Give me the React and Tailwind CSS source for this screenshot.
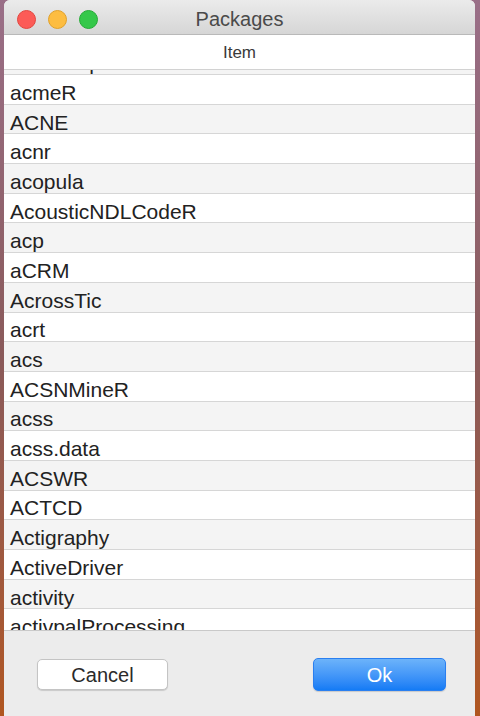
import React from "react";

const packages = [
  "acmeR",
  "ACNE",
  "acnr",
  "acopula",
  "AcousticNDLCodeR",
  "acp",
  "aCRM",
  "AcrossTic",
  "acrt",
  "acs",
  "ACSNMineR",
  "acss",
  "acss.data",
  "ACSWR",
  "ACTCD",
  "Actigraphy",
  "ActiveDriver",
  "activity",
  "activpalProcessing",
];

function TrafficLights() {
  return (
    <div className="absolute left-[13px] top-[10px] flex gap-[12px]">
      <span className="block h-[19px] w-[19px] rounded-full bg-[#fc5b57] border border-[#e2463f]" />
      <span className="block h-[19px] w-[19px] rounded-full bg-[#fdbd41] border border-[#e1a12a]" />
      <span className="block h-[19px] w-[19px] rounded-full bg-[#35c84a] border border-[#26ab37]" />
    </div>
  );
}

export default function App() {
  return (
    <div className="h-[716px] w-[480px] overflow-hidden bg-gradient-to-b from-[#9a6f88] via-[#8a5a5a] to-[#b0561f] pl-[4px] pr-[5px] font-['Liberation_Sans',Arial,sans-serif]">
      <div className="flex h-full flex-col overflow-hidden rounded-t-[6px] bg-[#ececec]">
        {/* title bar */}
        <div className="relative flex h-[35px] shrink-0 items-center justify-center border-b border-[#b9b9b9] bg-gradient-to-b from-[#ebebeb] to-[#d6d6d6] pt-[3px]">
          <TrafficLights />
          <span className="text-[20px] text-[#4a4a4a]">Packages</span>
        </div>

        {/* column header */}
        <div className="flex h-[35px] shrink-0 items-center justify-center border-b border-[#d2d2d2] bg-white pt-[2px]">
          <span className="text-[17px] text-[#3a3a3a]">Item</span>
        </div>

        {/* list */}
        <div className="h-[560px] shrink-0 overflow-hidden bg-white">
          <div className="mt-[-24.7px] flex h-[29.7px] items-center border-b border-[#d6d6d6] bg-[#f4f4f4] pl-[6px] pt-[6px] text-[21px] leading-none text-[#222]">
            ACMEeqtl
          </div>
          {packages.map((name, i) => (
            <div
              key={name}
              className={`flex h-[29.7px] items-center border-b border-[#d6d6d6] pl-[6px] pt-[6px] text-[21px] leading-none text-[#222] ${
                i % 2 === 0 ? "bg-white" : "bg-[#f4f4f4]"
              }`}
            >
              {name}
            </div>
          ))}
        </div>

        {/* footer */}
        <div className="flex flex-1 items-start justify-between border-t border-[#c9c9c9] bg-[#ececec] pl-[33px] pr-[29px] pt-[28px]">
          <button className="h-[31px] w-[131px] rounded-[5px] border border-[#c4c4c4] bg-white text-[20px] text-[#2a2a2a] shadow-[0_1px_1px_rgba(0,0,0,0.15)]">
            Cancel
          </button>
          <button className="mt-[-1px] h-[33px] w-[133px] rounded-[5px] border border-[#2a7ff0] bg-gradient-to-b from-[#6cb3fa] to-[#137bf5] text-[20px] text-white shadow-[0_1px_1px_rgba(0,0,0,0.15)]">
            Ok
          </button>
        </div>
      </div>
    </div>
  );
}
